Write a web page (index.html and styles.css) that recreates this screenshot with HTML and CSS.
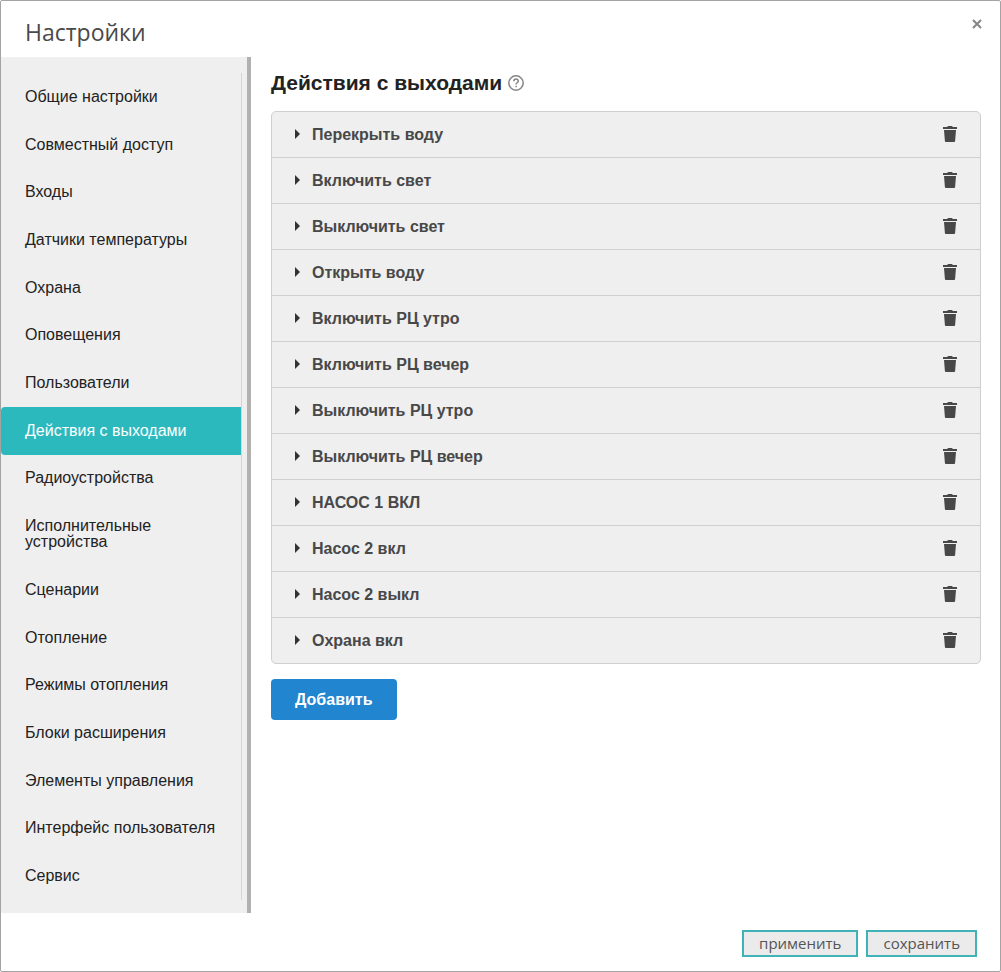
FILE: index.html
```html
<!DOCTYPE html>
<html lang="ru">
<head>
    <meta charset="UTF-8">
    <meta name="viewport" content="width=device-width, initial-scale=1.0">
    <title>Настройки</title>
    <link rel="stylesheet" href="styles.css">
</head>
<body>

    <!-- Shared icons -->
    <svg class="sprite" aria-hidden="true">
        <symbol id="trash" viewBox="0 0 14 16">
            <path d="M0 1h4.2L5 0h4l.8 1H14v2H0zM1 4h12l-.9 11a1 1 0 0 1-1 1H2.900a1 1 0 0 1-1-1z"/>
        </symbol>
        <symbol id="caret" viewBox="0 0 5 10">
            <path d="M0 0l5 5-5 5z"/>
        </symbol>
    </svg>

    <div class="modal">
        <!-- Header -->
        <header class="modal-header">
            <h1>Настройки</h1>
            <button class="close-btn" type="button" aria-label="Закрыть">
                <svg width="10" height="10" viewBox="0 0 10 10"><path d="M1 1l8 8M9 1l-8 8"/></svg>
            </button>
        </header>

        <div class="modal-body">
            <!-- Sidebar menu -->
            <nav class="sidebar">
                <div class="menu">
                    <a href="#">Общие настройки</a>
                    <a href="#">Совместный доступ</a>
                    <a href="#">Входы</a>
                    <a href="#">Датчики температуры</a>
                    <a href="#">Охрана</a>
                    <a href="#">Оповещения</a>
                    <a href="#">Пользователи</a>
                    <a href="#" class="active">Действия с выходами</a>
                    <a href="#">Радиоустройства</a>
                    <a href="#">Исполнительные<br>устройства</a>
                    <a href="#">Сценарии</a>
                    <a href="#">Отопление</a>
                    <a href="#">Режимы отопления</a>
                    <a href="#">Блоки расширения</a>
                    <a href="#">Элементы управления</a>
                    <a href="#">Интерфейс пользователя</a>
                    <a href="#">Сервис</a>
                </div>
            </nav>

            <!-- Output actions -->
            <main class="content">
                <div class="content-title">
                    <h2>Действия с выходами</h2>
                    <button class="help-btn" type="button" aria-label="Справка">
                        <svg width="16" height="16" viewBox="0 0 16 16">
                            <circle cx="8" cy="8" r="7.200"/>
                            <path d="M5.800 6.300c0-3 4.500-2.900 4.500-.2 0 1.700-2.200 1.600-2.200 3.300M8.100 10.700v1.600"/>
                        </svg>
                    </button>
                </div>

                <ul class="actions">
                    <li>
                        <button class="action-name" type="button"><svg><use href="#caret"/></svg>Перекрыть воду</button>
                        <button class="delete-btn" type="button" aria-label="Удалить"><svg><use href="#trash"/></svg></button>
                    </li>
                    <li>
                        <button class="action-name" type="button"><svg><use href="#caret"/></svg>Включить свет</button>
                        <button class="delete-btn" type="button" aria-label="Удалить"><svg><use href="#trash"/></svg></button>
                    </li>
                    <li>
                        <button class="action-name" type="button"><svg><use href="#caret"/></svg>Выключить свет</button>
                        <button class="delete-btn" type="button" aria-label="Удалить"><svg><use href="#trash"/></svg></button>
                    </li>
                    <li>
                        <button class="action-name" type="button"><svg><use href="#caret"/></svg>Открыть воду</button>
                        <button class="delete-btn" type="button" aria-label="Удалить"><svg><use href="#trash"/></svg></button>
                    </li>
                    <li>
                        <button class="action-name" type="button"><svg><use href="#caret"/></svg>Включить РЦ утро</button>
                        <button class="delete-btn" type="button" aria-label="Удалить"><svg><use href="#trash"/></svg></button>
                    </li>
                    <li>
                        <button class="action-name" type="button"><svg><use href="#caret"/></svg>Включить РЦ вечер</button>
                        <button class="delete-btn" type="button" aria-label="Удалить"><svg><use href="#trash"/></svg></button>
                    </li>
                    <li>
                        <button class="action-name" type="button"><svg><use href="#caret"/></svg>Выключить РЦ утро</button>
                        <button class="delete-btn" type="button" aria-label="Удалить"><svg><use href="#trash"/></svg></button>
                    </li>
                    <li>
                        <button class="action-name" type="button"><svg><use href="#caret"/></svg>Выключить РЦ вечер</button>
                        <button class="delete-btn" type="button" aria-label="Удалить"><svg><use href="#trash"/></svg></button>
                    </li>
                    <li>
                        <button class="action-name" type="button"><svg><use href="#caret"/></svg>НАСОС 1 ВКЛ</button>
                        <button class="delete-btn" type="button" aria-label="Удалить"><svg><use href="#trash"/></svg></button>
                    </li>
                    <li>
                        <button class="action-name" type="button"><svg><use href="#caret"/></svg>Насос 2 вкл</button>
                        <button class="delete-btn" type="button" aria-label="Удалить"><svg><use href="#trash"/></svg></button>
                    </li>
                    <li>
                        <button class="action-name" type="button"><svg><use href="#caret"/></svg>Насос 2 выкл</button>
                        <button class="delete-btn" type="button" aria-label="Удалить"><svg><use href="#trash"/></svg></button>
                    </li>
                    <li>
                        <button class="action-name" type="button"><svg><use href="#caret"/></svg>Охрана вкл</button>
                        <button class="delete-btn" type="button" aria-label="Удалить"><svg><use href="#trash"/></svg></button>
                    </li>
                </ul>

                <button class="add-btn" type="button">Добавить</button>
            </main>
        </div>

        <!-- Footer buttons -->
        <footer class="modal-footer">
            <button class="footer-btn" type="button">применить</button>
            <button class="footer-btn" type="button">сохранить</button>
        </footer>
    </div>

</body>
</html>
```
FILE: styles.css
```css
/* General reset */
* {
    margin: 0;
    padding: 0;
    box-sizing: border-box;
}

body {
    background-color: #fff;
    font-family: "Liberation Sans", Arial, sans-serif;
    font-size: 16px;
    color: #222;
}

button {
    border: none;
    background: none;
    font-family: inherit;
    cursor: pointer;
}

.sprite {
    display: none;
}

/* Window */
.modal {
    display: flex;
    flex-direction: column;
    min-height: 100vh;
    border: 1px solid #a3a3a3;
    border-radius: 2px;
}

/* Header */
.modal-header {
    display: flex;
    justify-content: space-between;
    align-items: flex-start;
    height: 56px;
    padding: 16px 18px 0 24px;
}
.modal-header h1 {
    font-family: "Open Sans", "Segoe UI", sans-serif;
    font-size: 23px;
    font-weight: 400;
    line-height: 30px;
    color: #4a4a4a;
}
.close-btn {
    display: flex;
    margin-top: 2px;
}
.close-btn svg {
    fill: none;
    stroke: #858585;
    stroke-width: 2;
}

.modal-body {
    display: flex;
    flex: 1;
}

/* Sidebar */
.sidebar {
    display: flex;
    flex-shrink: 0;
    width: 250px;
    padding: 16px 5px 13px 0;
    background-color: #efefef;
    border-right: 4px solid #b3b1b0;
}
.menu {
    display: flex;
    flex-direction: column;
    width: 241px;
    border-right: 1px solid #d5d5d5;
}
.menu a {
    display: flex;
    flex: 1 0 auto;
    align-items: center;
    padding: 15px 24px;
    line-height: 16px;
    color: #222;
    text-decoration: none;
}
.menu .active {
    background-color: #2cb9be;
    border-radius: 4px 0 0 4px;
    color: #fff;
}

/* Content */
.content {
    flex: 1;
    padding: 14px 19px 14px 20px;
}
.content-title {
    display: flex;
    align-items: center;
    gap: 6px;
    margin-bottom: 16px;
}
.content-title h2 {
    font-size: 21px;
    line-height: 24px;
}
.help-btn {
    display: flex;
}
.help-btn svg {
    fill: none;
    stroke: #858585;
    stroke-width: 1.5;
}

/* Actions list */
.actions {
    list-style: none;
    background-color: #efefef;
    border: 1px solid #cfcfcf;
    border-radius: 5px;
}
.actions li {
    display: flex;
    height: 46px;
    border-bottom: 1px solid #cfcfcf;
}
.actions li:last-child {
    height: 45px;
    border-bottom: none;
}
.action-name {
    display: flex;
    flex: 1;
    align-items: center;
    gap: 12px;
    padding-left: 23px;
    font-size: 16px;
    font-weight: bold;
    color: #484848;
}
.action-name svg {
    width: 5px;
    height: 10px;
    margin-bottom: 2px;
    fill: #333;
}
.delete-btn {
    display: flex;
    align-items: center;
    padding: 0 23px 2px;
}
.delete-btn svg {
    width: 14px;
    height: 16px;
    fill: #484848;
}

.add-btn {
    margin-top: 15px;
    padding: 0 24px;
    height: 41px;
    background-color: #2185d0;
    border-radius: 4px;
    font-size: 16px;
    font-weight: bold;
    color: #fff;
}

/* Footer */
.modal-footer {
    display: flex;
    justify-content: flex-end;
    gap: 8px;
    padding: 17px 23px 14px;
}
.footer-btn {
    height: 27px;
    padding: 0 15px;
    background-color: #ebebeb;
    border: 2px solid #3fb3b7;
    font-family: "Open Sans", "Segoe UI", sans-serif;
    font-size: 15px;
    line-height: 23px;
    color: #555;
}
```
